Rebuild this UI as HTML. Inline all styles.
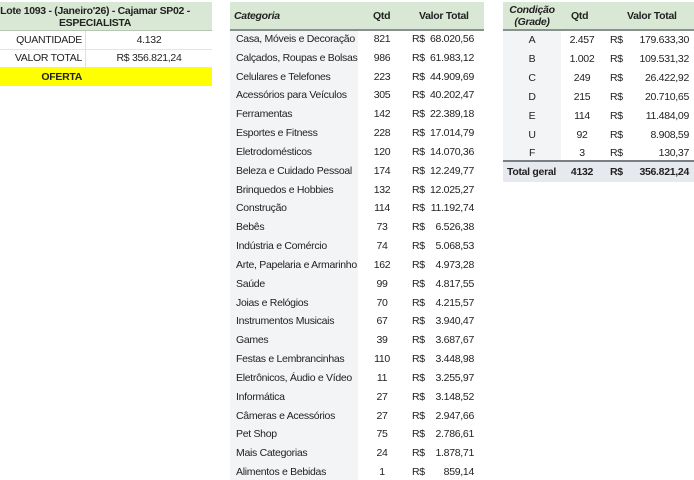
<!DOCTYPE html>
<html><head><meta charset="utf-8"><style>
body{margin:0;width:694px;height:480px;background:#fff;font-family:"Liberation Sans",Arial,sans-serif;font-size:10.5px;letter-spacing:-0.3px;color:#222;position:relative;overflow:hidden}
.a{position:absolute;white-space:nowrap}
.hdr{position:absolute;background:#d9e8d4;border-bottom:2px solid #8a9090}
.r{text-align:right}.c{text-align:center}
</style></head><body>
<!-- left table -->
<div class="a" style="left:0;top:2px;width:212px;height:28px;background:#d9e8d4;border-bottom:1px solid #b8c4b6"></div>
<div class="a c" style="left:0;top:5px;width:190px;font-weight:bold;line-height:12px">Lote 1093 - (Janeiro'26) - Cajamar SP02 -<br>ESPECIALISTA</div>
<div class="a" style="left:0;top:31px;width:212px;height:18px;border-bottom:1px solid #e4e4e4"></div>
<div class="a" style="left:0;top:49px;width:212px;height:18px;border-bottom:1px solid #e4e4e4"></div>
<div class="a" style="left:0;top:67px;width:212px;height:19px;background:#ffff00"></div>
<div class="a" style="left:85px;top:31px;width:1px;height:55px;background:#e0e0e0"></div>
<div class="a r" style="left:0;top:34px;width:82px">QUANTIDADE</div>
<div class="a c" style="left:86px;top:34px;width:126px">4.132</div>
<div class="a r" style="left:0;top:52px;width:82px">VALOR TOTAL</div>
<div class="a c" style="left:86px;top:52px;width:126px">R$ 356.821,24</div>
<div class="a r" style="left:0;top:71px;width:82px;font-weight:bold">OFERTA</div>

<!-- middle table -->
<div class="hdr" style="left:230px;top:2px;width:254px;height:27px"></div>
<div class="a" style="left:230px;top:31px;width:128px;height:449px;background:#f3f4f6"></div>
<div class="a" style="left:234px;top:10px;font-weight:bold;font-style:italic">Categoria</div>
<div class="a" style="left:373px;top:10px;font-weight:bold">Qtd</div>
<div class="a" style="left:419px;top:10px;font-weight:bold">Valor Total</div>
<div id="mid"></div>

<!-- right table -->
<div class="hdr" style="left:503px;top:2px;width:191px;height:27px"></div>
<div class="a c" style="left:503px;top:4px;width:58px;font-weight:bold;font-style:italic;line-height:12px">Condição<br>(Grade)</div>
<div class="a" style="left:571px;top:10px;font-weight:bold">Qtd</div>
<div class="a" style="left:627px;top:10px;font-weight:bold">Valor Total</div>
<div id="rt"></div>
<div class="a" style="left:503px;top:160px;width:191px;height:20px;background:#e6e9ee;border-top:2px solid #7a7f85"></div>
<div class="a" style="left:507px;top:166px;font-weight:bold">Total geral</div>
<div class="a c" style="left:562px;top:166px;width:40px;font-weight:bold">4132</div>
<div class="a" style="left:610px;top:166px;font-weight:bold">R$</div>
<div class="a r" style="left:620px;top:166px;width:69px;font-weight:bold">356.821,24</div>

<script>
var m=[["Casa, Móveis e Decoração",821,"68.020,56"],["Calçados, Roupas e Bolsas",986,"61.983,12"],["Celulares e Telefones",223,"44.909,69"],["Acessórios para Veículos",305,"40.202,47"],["Ferramentas",142,"22.389,18"],["Esportes e Fitness",228,"17.014,79"],["Eletrodomésticos",120,"14.070,36"],["Beleza e Cuidado Pessoal",174,"12.249,77"],["Brinquedos e Hobbies",132,"12.025,27"],["Construção",114,"11.192,74"],["Bebês",73,"6.526,38"],["Indústria e Comércio",74,"5.068,53"],["Arte, Papelaria e Armarinho",162,"4.973,28"],["Saúde",99,"4.817,55"],["Joias e Relógios",70,"4.215,57"],["Instrumentos Musicais",67,"3.940,47"],["Games",39,"3.687,67"],["Festas e Lembrancinhas",110,"3.448,98"],["Eletrônicos, Áudio e Vídeo",11,"3.255,97"],["Informática",27,"3.148,52"],["Câmeras e Acessórios",27,"2.947,66"],["Pet Shop",75,"2.786,61"],["Mais Categorias",24,"1.878,71"],["Alimentos e Bebidas",1,"859,14"]];
var h="";m.forEach(function(r,i){var t=33+i*18.83;
h+='<div class="a" style="left:236px;top:'+t+'px">'+r[0]+'</div><div class="a c" style="left:362px;top:'+t+'px;width:40px">'+r[1]+'</div><div class="a" style="left:412px;top:'+t+'px">R$</div><div class="a r" style="left:420px;top:'+t+'px;width:54px">'+r[2]+'</div>';});
document.getElementById("mid").innerHTML=h;
var q=[["A","2.457","179.633,30"],["B","1.002","109.531,32"],["C","249","26.422,92"],["D","215","20.710,65"],["E","114","11.484,09"],["U","92","8.908,59"],["F","3","130,37"]];
h='<div class="a" style="left:503px;top:31px;width:58px;height:129px;background:#f3f4f6"></div>';q.forEach(function(r,i){var t=34+i*18.9;
h+='<div class="a c" style="left:503px;top:'+t+'px;width:58px">'+r[0]+'</div><div class="a c" style="left:562px;top:'+t+'px;width:40px">'+r[1]+'</div><div class="a" style="left:610px;top:'+t+'px">R$</div><div class="a r" style="left:620px;top:'+t+'px;width:69px">'+r[2]+'</div>';});
document.getElementById("rt").innerHTML=h;
</script>
</body></html>
